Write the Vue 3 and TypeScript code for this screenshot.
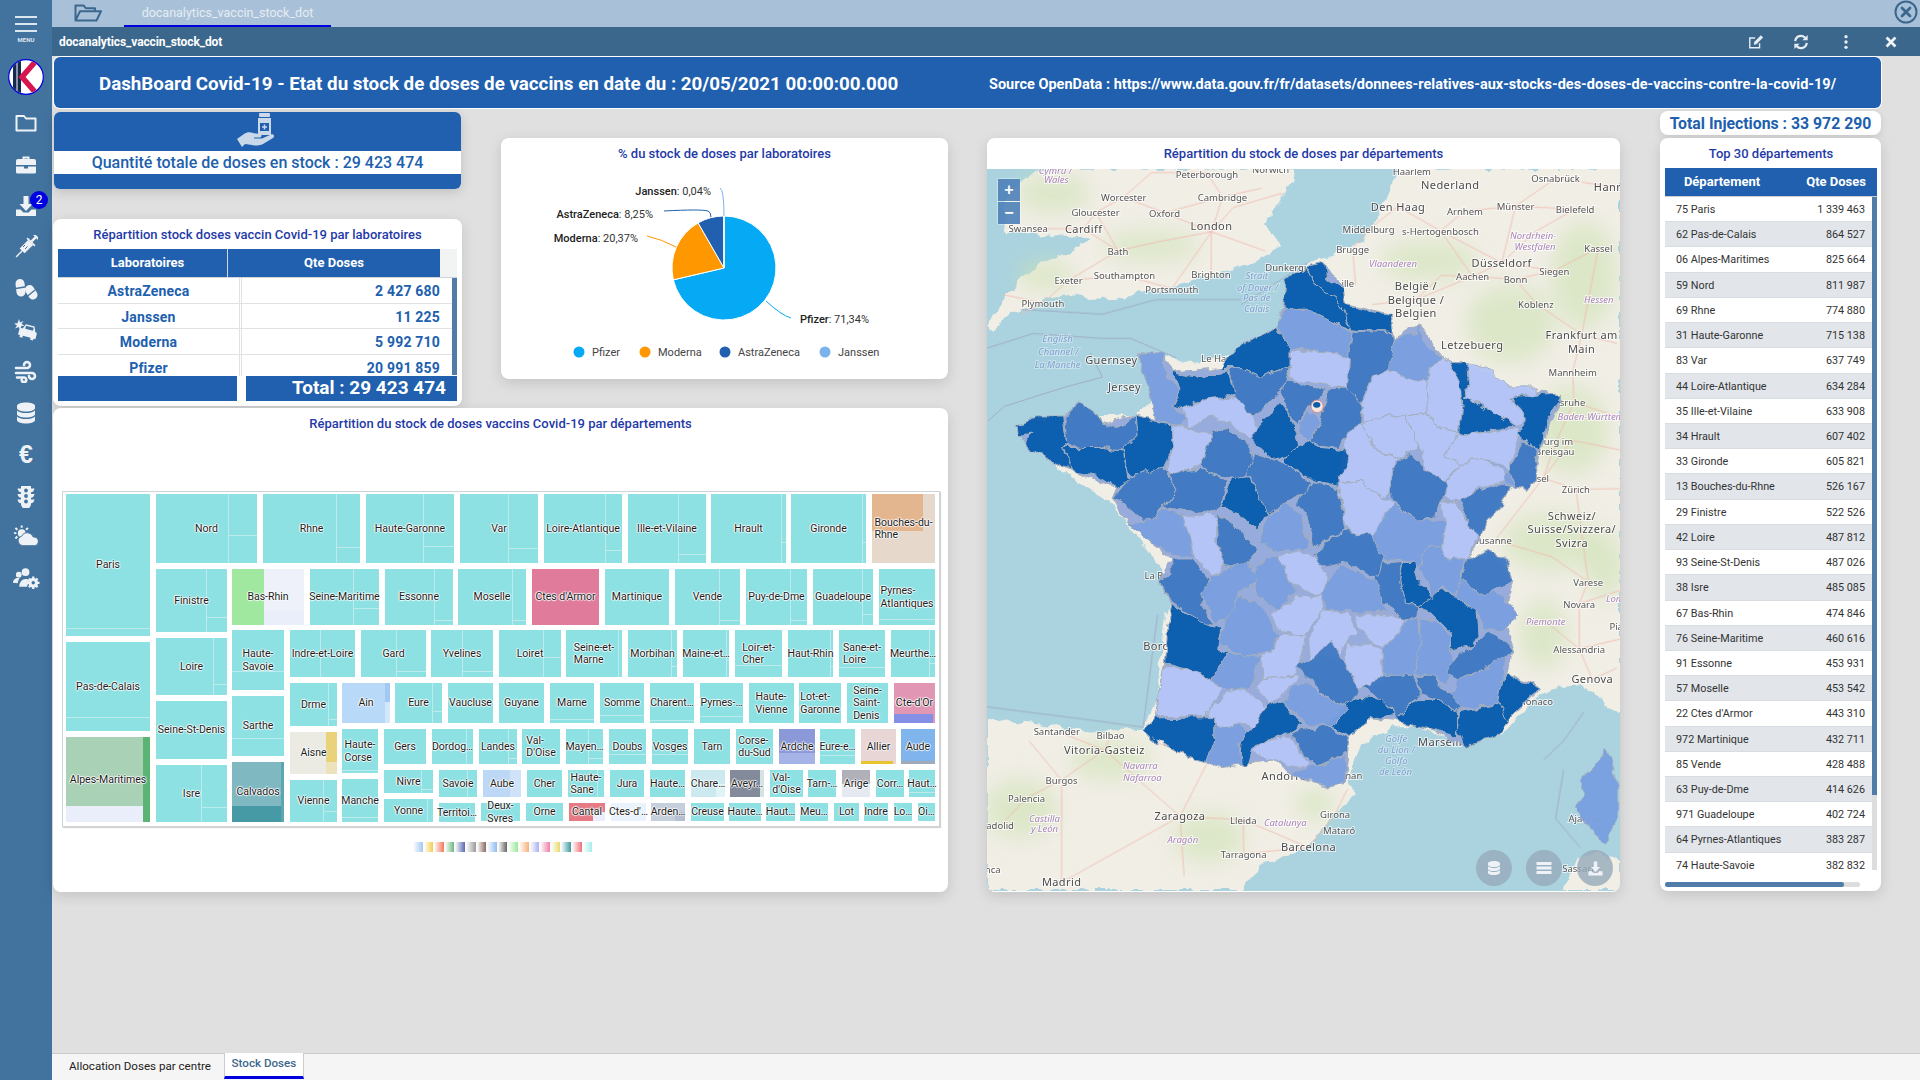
<script setup lang="ts">
interface Part { x1: number; y1: number; x2: number; y2: number; c: string }
interface Tile { label: string; x1: number; y1: number; x2: number; y2: number; c: string; parts: Part[]; lines: Part[] }
interface Opts { c?: string; v?: number; h?: number; p?: [number, number, number, number, string][] }

const ORIGIN_X = 62
const ORIGIN_Y = 491
const CYAN = '#8de1e3'
const LINE = '#bfeaec'

function t(label: string, x1: number, y1: number, x2: number, y2: number, o: Opts = {}): Tile {
  const lines: Part[] = []
  if (o.v) lines.push({ x1: o.v, y1, x2: o.v + 1, y2, c: LINE })
  if (o.h) lines.push({ x1: o.v || x1, y1: o.h, x2, y2: o.h + 1, c: LINE })
  const parts = (o.p || []).map(([a, b, c, d, e]) => ({ x1: a, y1: b, x2: c, y2: d, c: e }))
  return { label, x1, y1, x2, y2, c: o.c || CYAN, parts, lines }
}

const tiles: Tile[] = [
  t('Paris', 66, 494, 150, 636, { h: 628 }),
  t('Pas-de-Calais', 66, 642, 150, 731, { h: 717 }),
  t('Alpes-Maritimes', 66, 737, 150, 822, { c: '#a8d1b5', p: [[66, 806, 143, 822, '#e9eefa'], [143, 737, 150, 822, '#5bb374']] }),
  t('Nord', 156, 494, 257, 563, { v: 228, h: 535 }),
  t('Rhne', 263, 494, 360, 563, { v: 336, h: 547 }),
  t('Haute-Garonne', 366, 494, 454, 563, { v: 423, h: 546 }),
  t('Var', 460, 494, 538, 563, { v: 508, h: 548 }),
  t('Loire-Atlantique', 544, 494, 622, 563, { v: 605, h: 550 }),
  t('Ille-et-Vilaine', 628, 494, 706, 563, { v: 678, h: 554 }),
  t('Hrault', 711, 494, 786, 563, { v: 781, h: 542 }),
  t('Gironde', 791, 494, 866, 563, { v: 862, h: 542 }),
  t('Bouches-du-\nRhne', 872, 494, 935, 563, { c: '#e6d8cb', p: [[872, 494, 923, 531, '#e4b68f']] }),
  t('Finistre', 156, 569, 227, 632, { v: 206, h: 617 }),
  t('Loire', 156, 638, 227, 695, { v: 213, h: 684 }),
  t('Seine-St-Denis', 156, 701, 227, 759),
  t('Isre', 156, 765, 227, 822, { v: 201, h: 807 }),
  t('Bas-Rhin', 232, 569, 304, 625, { c: '#eef1fa', p: [[232, 569, 264, 625, '#a0e8a0'], [264, 611, 304, 625, '#e9eefa']] }),
  t('Seine-Maritime', 310, 569, 379, 625, { v: 353, h: 608 }),
  t('Essonne', 385, 569, 453, 625, { v: 434, h: 620 }),
  t('Moselle', 458, 569, 526, 625, { v: 512, h: 620 }),
  t("Ctes d'Armor", 532, 569, 599, 625, { c: '#e07b9c' }),
  t('Martinique', 605, 569, 669, 625),
  t('Vende', 675, 569, 740, 625, { v: 719, h: 620 }),
  t('Puy-de-Dme', 746, 569, 807, 625, { v: 790, h: 620 }),
  t('Guadeloupe', 813, 569, 873, 625, { v: 862, h: 614 }),
  t('Pyrnes-\nAtlantiques', 879, 569, 935, 625, { h: 619 }),
  t('Haute-\nSavoie', 232, 630, 284, 690, { h: 671 }),
  t('Sarthe', 232, 696, 284, 756, { h: 738 }),
  t('Calvados', 232, 762, 284, 822, { c: '#7fb8c1', p: [[232, 806, 281, 822, '#459aa5'], [281, 762, 284, 822, '#5ba6b0']] }),
  t('Indre-et-Loire', 290, 630, 355, 677, { v: 320 }),
  t('Gard', 361, 630, 426, 677, { v: 396, h: 671 }),
  t('Yvelines', 431, 630, 493, 677, { v: 462, h: 671 }),
  t('Loiret', 499, 630, 561, 677, { v: 543, h: 657 }),
  t('Seine-et-\nMarne', 566, 630, 622, 677, { v: 618 }),
  t('Morbihan', 628, 630, 677, 677, { v: 671, h: 666 }),
  t('Maine-et…', 683, 630, 729, 677, { v: 726, h: 660 }),
  t('Loir-et-\nCher', 735, 630, 782, 677, { h: 665 }),
  t('Haut-Rhin', 788, 630, 833, 677, { v: 830, h: 666 }),
  t('Sane-et-\nLoire', 839, 630, 885, 677, { h: 667 }),
  t('Meurthe…', 891, 630, 935, 677, { v: 929, h: 663 }),
  t('Drme', 290, 683, 337, 726, { v: 328, h: 719 }),
  t('Ain', 342, 683, 390, 723, { c: '#b9d9f8', p: [[385, 683, 390, 702, '#a3c8f4'], [385, 702, 390, 723, '#d4e6fb']] }),
  t('Eure', 395, 683, 442, 723, { v: 432, h: 711 }),
  t('Vaucluse', 448, 683, 493, 723),
  t('Guyane', 499, 683, 544, 723),
  t('Marne', 550, 683, 594, 723, { h: 719 }),
  t('Somme', 600, 683, 644, 723, { h: 715 }),
  t('Charent…', 650, 683, 694, 723, { h: 720 }),
  t('Pyrnes-…', 700, 683, 743, 723, { h: 716 }),
  t('Haute-\nVienne', 749, 683, 794, 723),
  t('Lot-et-\nGaronne', 799, 683, 841, 723),
  t('Seine-\nSaint-\nDenis', 847, 683, 888, 723),
  t("Cte-d'Or", 894, 683, 935, 723, { c: '#e196b4', p: [[894, 714, 933, 723, '#8490e6']] }),
  t('Aisne', 290, 732, 337, 774, { c: '#ebebe3', p: [[326, 732, 337, 762, '#e9d27a'], [326, 762, 337, 774, '#ebe3bc']] }),
  t('Manche', 342, 779, 378, 822, { h: 817 }),
  t('Vienne', 290, 780, 337, 822, { v: 323, h: 811 }),
  t('Haute-\nCorse', 342, 729, 378, 773, { h: 770 }),
  t('Gers', 384, 729, 426, 764),
  t('Dordog…', 432, 729, 473, 764, { v: 466 }),
  t('Landes', 479, 729, 517, 764, { v: 508, h: 758 }),
  t("Val-\nD'Oise", 522, 729, 560, 764),
  t('Mayen…', 566, 729, 603, 764, { v: 588, h: 758 }),
  t('Doubs', 609, 729, 646, 764, { h: 754 }),
  t('Vosges', 652, 729, 688, 764, { h: 754 }),
  t('Tarn', 694, 729, 730, 764),
  t('Corse-\ndu-Sud', 736, 729, 773, 764),
  t('Ardche', 779, 729, 815, 764, { c: '#8b99d8', p: [[779, 753, 815, 764, '#a5b3e6']] }),
  t('Eure-e…', 820, 729, 855, 764, { h: 755 }),
  t('Allier', 861, 729, 896, 764, { c: '#e8d5d5', p: [[861, 761, 893, 764, '#e8c42f']] }),
  t('Aude', 901, 729, 935, 764, { c: '#7fb4ec', p: [[901, 761, 935, 764, '#a0aab8']] }),
  t('Nivre', 384, 770, 433, 793, { v: 421, h: 789 }),
  t('Yonne', 384, 799, 433, 822, { v: 427 }),
  t('Savoie', 439, 770, 477, 797, { v: 467 }),
  t('Territoi…', 439, 803, 475, 822),
  t('Aube', 483, 770, 521, 797, { c: '#bcd8f6', p: [[510, 770, 521, 797, '#cfe2f8']] }),
  t('Cher', 527, 770, 562, 797),
  t('Haute-\nSane', 568, 770, 604, 797, { v: 597 }),
  t('Jura', 610, 770, 644, 797),
  t('Haute…', 650, 770, 685, 797),
  t('Chare…', 691, 770, 725, 797, { c: '#cce9f0', p: [[716, 784, 725, 797, '#e0f3f7']] }),
  t('Aveyr…', 730, 770, 764, 797, { c: '#838a99', p: [[760, 770, 764, 797, '#d4e4e4']] }),
  t("Val-\nd'Oise", 770, 770, 803, 797),
  t('Tarn-…', 808, 770, 836, 797),
  t('Arige', 842, 770, 870, 797, { c: '#b0b0b8', p: [[842, 784, 870, 797, '#e5eaf2']] }),
  t('Corr…', 876, 770, 904, 797),
  t('Haut…', 909, 770, 935, 797, { h: 792 }),
  t('Deux-\nSvres', 481, 803, 520, 821),
  t('Orne', 526, 803, 563, 821),
  t('Cantal', 569, 803, 605, 821, { c: '#e57a85', p: [[593, 812, 605, 821, '#e9eefa']] }),
  t("Ctes-d'…", 611, 803, 646, 821, { c: '#eaf3fb' }),
  t('Arden…', 651, 803, 685, 821, { c: '#c5cfdc', p: [[675, 812, 685, 821, '#b4c0cf']] }),
  t('Creuse', 691, 803, 724, 821),
  t('Haute…', 729, 803, 761, 821),
  t('Haut…', 766, 803, 795, 821),
  t('Meu…', 800, 803, 828, 821),
  t('Lot', 834, 803, 859, 821),
  t('Indre', 864, 803, 888, 821),
  t('Lo…', 894, 803, 912, 821),
  t('Oi…', 918, 803, 935, 821),
]

function box(b: { x1: number; y1: number; x2: number; y2: number }, ox = ORIGIN_X, oy = ORIGIN_Y) {
  return { left: `${b.x1 - ox}px`, top: `${b.y1 - oy}px`, width: `${b.x2 - b.x1}px`, height: `${b.y2 - b.y1}px` }
}

const legendSwatches = ['#a3c8f4', '#f3cf4f', '#f4775c', '#6fb87f', '#5a6ab0', '#999999', '#8a6a60', '#90bcee', '#666666', '#9be89b', '#f5b27a', '#aab0f0', '#f07fa8', '#e8d96f', '#3d9aa0', '#f0717a', '#a5ede9']

// Pie slices, clockwise from twelve o'clock
const pieSlices = [
  { name: 'Pfizer', pct: 71.34, color: '#05a9f4' },
  { name: 'Moderna', pct: 20.37, color: '#ff9800' },
  { name: 'AstraZeneca', pct: 8.25, color: '#2060ae' },
  { name: 'Janssen', pct: 0.04, color: '#7cb2ea' },
]
const legendPos = [78, 144, 224, 324]
const PIE_X = 223
const PIE_Y = 130
const PIE_R = 52
function slicePaths() {
  let a = -Math.PI / 2
  return pieSlices.map(s => {
    const b = a + (s.pct / 100) * Math.PI * 2
    const large = b - a > Math.PI ? 1 : 0
    const d = `M${PIE_X} ${PIE_Y}L${PIE_X + PIE_R * Math.cos(a)} ${PIE_Y + PIE_R * Math.sin(a)}A${PIE_R} ${PIE_R} 0 ${large} 1 ${PIE_X + PIE_R * Math.cos(b)} ${PIE_Y + PIE_R * Math.sin(b)}Z`
    a = b
    return { d, color: s.color }
  })
}
const slices = slicePaths()

const labRows = [
  ['AstraZeneca', '2 427 680'],
  ['Janssen', '11 225'],
  ['Moderna', '5 992 710'],
  ['Pfizer', '20 991 859'],
]

const topRows = [
  ['75 Paris', '1 339 463'], ['62 Pas-de-Calais', '864 527'], ['06 Alpes-Maritimes', '825 664'],
  ['59 Nord', '811 987'], ['69 Rhne', '774 880'], ['31 Haute-Garonne', '715 138'],
  ['83 Var', '637 749'], ['44 Loire-Atlantique', '634 284'], ['35 Ille-et-Vilaine', '633 908'],
  ['34 Hrault', '607 402'], ['33 Gironde', '605 821'], ['13 Bouches-du-Rhne', '526 167'],
  ['29 Finistre', '522 526'], ['42 Loire', '487 812'], ['93 Seine-St-Denis', '487 026'],
  ['38 Isre', '485 085'], ['67 Bas-Rhin', '474 846'], ['76 Seine-Maritime', '460 616'],
  ['91 Essonne', '453 931'], ['57 Moselle', '453 542'], ["22 Ctes d'Armor", '443 310'],
  ['972 Martinique', '432 711'], ['85 Vende', '428 488'], ['63 Puy-de-Dme', '414 626'],
  ['971 Guadeloupe', '402 724'], ['64 Pyrnes-Atlantiques', '383 287'], ['74 Haute-Savoie', '382 832'],
]

// Map shapes are noted in the coordinates of a stretched crop; SX/SY bring them back to pixels
const SX = 1 / 2.45
const SY = 1 / 2.063
const OX = 7
const OY = 39

const D = '#0b5cad'
const M = '#4079c3'
const L = '#7a9fe0'
const P = '#b5c6f7'

// Outline under the departments, so that no land shows between two of them
const france = '745,355 750,305 800,285 845,275 890,330 895,360 1010,380 1018,430 1078,398 1130,470 1150,480 1195,480 1300,530 1425,548 1370,660 1360,720 1340,745 1300,735 1240,810 1225,840 1195,885 1255,870 1305,930 1290,975 1320,1000 1290,1030 1310,1075 1290,1120 1375,1150 1290,1220 1265,1250 1185,1270 1100,1235 1020,1220 960,1215 905,1250 895,1345 850,1355 765,1325 715,1300 640,1310 590,1315 548,1300 430,1260 400,1238 430,1215 435,1170 455,1100 470,980 440,930 470,885 415,850 365,815 325,760 335,740 230,705 120,660 90,610 205,590 240,565 300,605 380,590 430,600 415,540 385,460 450,460 470,500 590,490 640,440 730,410'

const depts: [string, string][] = [
  [D, '800,285 845,275 850,310 890,330 895,360 960,375 1010,380 1015,418 905,410 895,385 870,345 820,320'],
  [D, '745,355 750,305 800,285 820,320 870,345 895,385 905,410 860,395 800,370 745,370'],
  [L, '745,370 800,370 860,395 912,415 905,468 860,460 760,450 730,405'],
  [M, '912,415 1015,418 1018,430 1000,495 960,505 935,565 900,535 905,468'],
  [L, '1018,430 1070,420 1078,398 1085,435 1130,470 1105,490 1095,515 1050,515 1000,495'],
  [P, '960,505 1000,495 1050,515 1095,515 1100,550 1085,585 1040,590 985,590 940,610 938,565'],
  [P, '1130,470 1150,480 1175,520 1185,555 1175,625 1140,620 1085,585 1100,550 1095,515 1105,490'],
  [D, '1150,480 1195,480 1200,530 1190,550 1240,575 1310,610 1200,628 1175,625 1185,555 1175,520'],
  [P, '1195,480 1240,490 1300,530 1365,530 1365,545 1305,550 1335,600 1310,610 1240,575 1190,550 1200,530'],
  [D, '1305,550 1365,545 1425,548 1395,590 1370,660 1350,650 1315,625 1335,600'],
  [M, '1330,640 1365,660 1360,720 1340,745 1305,735 1295,700'],
  [L, '1280,705 1300,705 1310,735 1285,725'],
  [P, '1175,625 1200,628 1315,615 1320,640 1295,700 1230,675 1175,690 1140,670 1160,640'],
  [P, '1040,590 1085,585 1140,620 1175,625 1160,640 1140,670 1175,690 1140,725 1090,700 1080,650 1065,625'],
  [P, '1175,690 1230,675 1285,705 1285,725 1230,735 1180,765 1140,760 1145,725'],
  [P, '985,590 1040,590 1065,625 1080,650 1025,680 965,655 935,605'],
  [M, '1025,680 1055,670 1090,700 1145,725 1140,760 1115,800 1075,805 1010,765 1005,745'],
  [P, '895,630 935,605 965,655 1025,680 1005,745 985,755 935,725 880,730 885,680'],
  [P, '880,730 935,725 985,755 1015,770 1000,800 980,835 910,840 895,810'],
  [P, '1130,770 1165,765 1200,815 1225,830 1195,885 1145,885 1130,860 1140,810'],
  [M, '1175,765 1230,740 1270,730 1300,735 1280,775 1240,810 1225,840 1200,815'],
  [L, '1000,785 1015,770 1075,805 1130,805 1140,810 1130,860 1095,860 1075,900 1040,885 975,890 960,840'],
  [L, '1095,860 1130,860 1145,885 1195,885 1180,915 1175,965 1130,940 1110,965 1075,900'],
  [M, '1195,885 1255,870 1285,880 1305,930 1260,950 1215,955 1180,925'],
  [L, '1180,925 1215,955 1260,950 1290,975 1320,1000 1290,1030 1235,1030 1215,990 1165,965'],
  [D, '1130,945 1165,965 1215,990 1220,1040 1205,1065 1150,1075 1150,1035 1115,1005 1075,985'],
  [D, '1035,890 1065,890 1075,930 1110,965 1075,985 1040,970 1028,930'],
  [M, '975,895 1035,890 1028,930 1040,970 1075,985 1070,1005 1040,1012 990,975 965,930'],
  [L, '885,895 975,935 995,995 935,995 850,990 830,950'],
  [P, '730,880 785,870 830,885 850,920 835,960 790,945 760,930'],
  [L, '700,880 730,880 760,930 780,955 730,985 675,960 665,915'],
  [P, '500,800 560,790 580,800 580,850 600,900 570,920 525,880'],
  [M, '580,790 620,810 680,865 660,890 640,910 600,900 585,860'],
  [L, '745,768 790,795 805,865 730,870 685,850 700,800'],
  [M, '815,725 880,740 897,825 840,850 815,865 800,790 775,770'],
  [M, '895,828 955,835 990,880 975,925 890,890 835,900 820,875 845,850'],
  [P, '915,1000 990,1000 1045,1010 1010,1050 985,1070 955,1055 925,1025'],
  [D, '90,610 150,590 205,590 215,650 200,660 230,700 205,695 120,660 110,640 130,625 95,630'],
  [D, '200,655 250,655 300,655 350,660 365,725 335,740 290,715 230,705'],
  [M, '210,590 240,565 275,575 300,605 345,610 380,590 385,630 350,660 300,655 250,655 215,650'],
  [D, '380,590 470,610 470,660 450,695 370,715 365,710 350,660 385,630'],
  [L, '385,460 450,460 455,510 490,535 470,570 505,590 490,610 430,600 415,540'],
  [D, '470,500 530,510 610,495 625,545 560,555 500,575 470,570 490,535'],
  [P, '500,575 560,555 625,550 665,590 680,630 660,640 620,610 570,590 510,615'],
  [D, '590,490 640,440 730,410 760,450 760,490 690,510 640,490'],
  [M, '615,495 640,490 690,510 760,490 755,520 690,580 665,590 625,550'],
  [P, '760,455 860,460 905,468 900,535 840,525 760,515'],
  [M, '735,540 755,520 845,535 830,555 805,565 780,615 755,580'],
  [D, '735,560 755,580 785,650 770,665 720,680 665,640 680,610'],
  [L, '800,575 835,600 810,640 780,630'],
  [M, '850,535 900,535 940,565 935,605 895,630 880,655 835,650 810,640 835,600 845,570'],
  [D, '785,650 810,640 835,655 900,660 905,685 880,715 880,735 810,720 745,690 745,675'],
  [M, '540,690 570,620 610,615 665,660 670,690 640,725 560,710'],
  [P, '470,610 510,615 570,630 540,690 510,705 455,705 470,660'],
  [M, '325,760 370,715 450,695 480,740 460,765 430,800 410,810 355,770'],
  [M, '460,705 540,700 605,725 590,780 570,785 510,790 450,780 480,740'],
  [D, '615,720 660,715 690,760 720,785 690,800 680,830 630,790 590,780'],
  [M, '670,665 720,680 745,690 810,725 800,750 745,770 700,790 665,715 650,715'],
  [L, '365,815 430,800 450,780 500,800 525,880 470,875 415,850'],
  [M, '470,885 520,885 570,935 540,980 570,1020 540,1015 470,975 440,930 470,915'],
  [L, '570,920 610,905 660,890 675,930 630,965 605,1010 575,1020 540,960'],
  [L, '630,965 680,975 730,1040 715,1075 650,1085 585,1060 605,1005'],
  [P, '730,985 790,960 840,960 840,990 800,1040 735,1035 712,1000'],
  [P, '840,990 905,1000 925,1040 900,1050 880,1085 810,1090 805,1050'],
  [D, '470,980 540,1015 590,1030 585,1070 610,1075 570,1135 530,1115 455,1100 460,1020'],
  [P, '455,1105 530,1115 595,1150 555,1200 555,1210 430,1210 435,1170'],
  [L, '610,1075 650,1085 690,1085 670,1120 665,1150 610,1160 570,1135'],
  [P, '730,1040 800,1040 790,1090 770,1125 690,1130 690,1085 715,1075'],
  [M, '860,1055 900,1110 930,1150 900,1195 850,1170 775,1105 810,1090'],
  [P, '895,1060 955,1060 985,1075 990,1140 950,1145 925,1150 895,1110'],
  [L, '985,1075 1050,1010 1075,1005 1080,1060 1060,1125 995,1140'],
  [L, '1080,1005 1115,1010 1150,1040 1150,1080 1170,1105 1145,1145 1110,1125 1060,1120 1080,1060'],
  [M, '1205,1065 1240,1035 1280,1050 1310,1075 1280,1095 1240,1110 1170,1135 1145,1115 1170,1085'],
  [L, '1170,1135 1240,1110 1290,1085 1280,1130 1270,1185 1170,1195 1150,1165'],
  [D, '1290,1120 1320,1135 1375,1150 1345,1170 1290,1220 1270,1185 1280,1140'],
  [D, '1175,1200 1270,1185 1295,1220 1265,1250 1185,1270 1170,1235'],
  [M, '1065,1125 1110,1125 1150,1165 1180,1195 1170,1200 1120,1175 1080,1165'],
  [D, '1075,1175 1120,1175 1170,1200 1170,1250 1100,1235 1020,1220 1050,1190'],
  [M, '990,1125 1060,1125 1080,1165 1050,1190 1020,1220 1005,1190 935,1150 950,1145'],
  [D, '925,1170 990,1175 1015,1210 960,1215 905,1250 850,1225 880,1200'],
  [L, '770,1145 800,1140 850,1170 900,1195 860,1230 800,1225 745,1180'],
  [P, '690,1130 770,1125 780,1130 745,1165 710,1190 680,1150'],
  [P, '555,1200 610,1160 660,1155 705,1195 680,1230 630,1225 590,1240 560,1210'],
  [D, '705,1190 745,1180 790,1225 760,1240 700,1260 665,1280 655,1310 635,1310 640,1260'],
  [L, '575,1220 590,1235 630,1225 655,1240 635,1270 640,1310 590,1315 550,1300 575,1260'],
  [D, '400,1238 430,1215 575,1212 575,1260 548,1300 500,1290 430,1260'],
  [P, '665,1285 700,1260 760,1250 800,1300 810,1310 780,1315 715,1300'],
  [M, '760,1240 850,1230 905,1255 900,1285 825,1310 795,1290'],
  [L, '765,1325 830,1310 895,1290 895,1345 850,1355 790,1340'],
]
const corsica = '1470,1340 1520,1300 1535,1280 1560,1330 1560,1420 1530,1470 1490,1440 1460,1395 1480,1370'

const land = [
  '150,80 770,80 765,105 725,165 690,190 725,215 740,240 690,265 620,285 550,305 470,325 400,335 340,348 280,350 220,340 170,345 110,370 60,385 30,420 17,400 40,380 60,345 110,300 160,270 240,245 270,225 205,215 150,222 100,212 60,205 60,150 100,110',
  '800,280 870,255 940,230 965,190 1000,135 1025,80 1568,80 1568,1210 1520,1170 1470,1145 1420,1150 1375,1160 1290,1240 1190,1270 1070,1230 1010,1230 930,1270 900,1340 920,1370 860,1420 800,1480 680,1520 640,1568 17,1568 17,1215 130,1225 280,1240 400,1235 435,1170 455,1000 470,980 440,900 365,820 320,765 210,710 90,620 210,590 380,590 470,520 400,460 530,480 600,470 740,420 745,340',
  '1430,1568 1460,1510 1520,1490 1568,1510 1568,1568',
]

const greens: [number, number, number, number][] = [
  [180, 130, 90, 40], [420, 240, 120, 30], [160, 300, 70, 30], [1100, 270, 120, 40], [1300, 400, 110, 80], [1450, 620, 90, 90],
  [1480, 300, 80, 110], [1400, 850, 120, 60], [1380, 1040, 60, 70], [100, 1400, 90, 60], [320, 1300, 100, 40], [560, 1460, 90, 50], [820, 1390, 50, 30], [1530, 900, 50, 70],
]

const roads = [
  '284,170 352,138 452,171 567,210 594,138 556,88', '254,204 284,170', '567,210 470,327', '567,210 566,297', '567,210 700,250', '217,310 354,300 470,327',
  '154,357 217,310 338,249 284,170', '1024,158 1128,208 1207,302 1278,274 1312,157', '1024,158 952,205 913,245 920,320', '1128,208 1188,167 1312,157 1458,163',
  '1278,274 1407,290 1515,243', '1312,308 1362,358 1474,422 1452,499 1455,562', '1474,422 1515,243', '1207,302 1068,350 960,360', '1455,562 1412,641 1380,718 1460,741',
  '1460,741 1490,932 1468,977 1468,1070 1500,1133', '1262,846 1380,718', '1468,977 1568,950', '1468,1070 1568,1050', '188,1240 305,1279 320,1248', '305,1279 200,1341 114,1378 52,1433',
  '200,1341 200,1552', '305,1279 490,1416 645,1423 805,1480', '805,1480 870,1411', '490,1416 200,1552', '646,1493 805,1480',
  '352,138 420,88 556,88', '452,171 594,138 690,120', '567,210 620,160 740,130', '338,249 440,230 567,210', '118,203 254,204 338,249', '60,340 154,357 100,380',
  '1128,208 1278,274 1360,210 1458,163', '1312,157 1410,100 1560,118', '1207,302 1312,308 1407,290', '1068,350 1130,300 1207,302', '1474,422 1560,440', '1455,562 1560,590',
  '1460,741 1568,740', '1380,718 1450,640 1568,660', '1262,846 1400,880 1490,932', '1380,1010 1468,1070', '1500,1133 1560,1110', '120,1260 200,1341', '490,1416 560,1300 420,1260',
  '645,1423 646,1493', '490,1416 500,1540', '870,1411 900,1360',
]

const borders = [
  '17,450 130,420 300,430 370,430 480,470', '17,1190 250,1215 400,1232', '435,1000 415,1130 400,1230', '20,600 60,570 210,530 300,510 270,460',
  '640,360 735,310 800,275', '100,370 300,380 430,350 640,350', '1380,1300 1430,1260 1480,1200', '1430,1320 1410,1420 1470,1480',
]

type Lbl = [string, number, number, string?]
const labels: Lbl[] = [
  ['Peterborough', 556, 90], ['Norwich', 712, 80], ['Haarlem', 1058, 84], ['Cymru /', 185, 82, 'r'], ['Wales', 187, 101, 'r'],
  ['Nederland', 1152, 114, 'b'], ['Osnabrück', 1410, 100], ['Hannover', 1570, 118, 'b'], ['Worcester', 352, 138], ['Cambridge', 594, 138],
  ['Den Haag', 1024, 158, 'b'], ['Arnhem', 1188, 167], ['Münster', 1312, 157], ['Bielefeld', 1458, 163], ['Gloucester', 283, 170], ['Oxford', 452, 171],
  ['Swansea', 118, 203], ['Cardiff', 254, 204, 'b'], ['London', 567, 199, 'b'], ['Middelburg', 952, 205], ['s-Hertogenbosch', 1128, 208],
  ['Nordrhein-', 1355, 216, 'r'], ['Westfalen', 1360, 239, 'r'], ['Kassel', 1515, 243], ['Bath', 338, 249], ['Brugge', 913, 245], ['Vlaanderen', 1012, 274, 'r'],
  ['Düsseldorf', 1278, 274, 'b'], ['Exeter', 217, 310], ['Southampton', 354, 300], ['Brighton', 566, 297], ['Strait', 678, 300, 'w'], ['of Dover /', 680, 323, 'w'],
  ['Pas de', 678, 345, 'w'], ['Calais', 678, 367, 'w'], ['Portsmouth', 470, 327], ['Dunkerque', 760, 283], ['Lille', 895, 315], ['Aachen', 1207, 302], ['Bonn', 1312, 308],
  ['Siegen', 1407, 290], ['België /', 1068, 322, 'b'], ['Belgique /', 1068, 350, 'b'], ['Belgien', 1068, 378, 'b'], ['Koblenz', 1362, 358], ['Hessen', 1516, 348, 'r'],
  ['Plymouth', 154, 357], ['Frankfurt am', 1474, 422, 'b'], ['Main', 1474, 451, 'b'], ['English', 190, 430, 'w'], ['Channel /', 192, 456, 'w'], ['La Manche', 190, 483, 'w'],
  ['Guernsey', 322, 475, 'b'], ['Letzebuerg', 1206, 444, 'b'], ['Le Havre', 590, 471], ['Rouen', 690, 478], ['Mannheim', 1452, 499], ['Jersey', 354, 530, 'b'],
  ['Karlsruhe', 1430, 562], ['Baden-Württemberg', 1520, 591, 'r'], ['Freiburg im', 1390, 641], ['Breisgau', 1408, 663], ['Zürich', 1460, 741], ['Basel', 1365, 718],
  ['Schweiz/', 1450, 797, 'b'], ['Suisse/Svizzera/', 1450, 824, 'b'], ['Svizra', 1450, 852, 'b'], ['Lausanne', 1250, 846], ['Varese', 1490, 932], ['Novara', 1468, 977],
  ['Lombardia', 1590, 965, 'r'], ['Piemonte', 1386, 1012, 'r'], ['Piacenza', 1590, 1023], ['Alessandria', 1468, 1070], ['Genova', 1500, 1133, 'b'],
  ['La Rochelle', 465, 918], ['Bordeaux', 465, 1064, 'b'], ['Santander', 188, 1240], ['Bilbao', 320, 1248], ['Vitoria-Gasteiz', 305, 1279, 'b'], ['Marseille', 1135, 1262, 'b'],
  ['Golfe', 1020, 1254, 'w'], ['du Lion /', 1020, 1277, 'w'], ['Golfo', 1020, 1300, 'w'], ['de León', 1018, 1322, 'w'], ['Navarra', 393, 1311, 'r'], ['Nafarroa', 398, 1334, 'r'],
  ['Andorra', 745, 1332, 'b'], ['Perpignan', 880, 1330], ['Burgos', 200, 1341], ['Palencia', 114, 1378], ['Zaragoza', 490, 1416, 'b'], ['Lleida', 645, 1423], ['Girona', 870, 1411],
  ['Catalunya', 748, 1428, 'r'], ['Mataró', 880, 1445], ['Castilla', 158, 1419, 'r'], ['y León', 158, 1441, 'r'], ['Valladolid', 30, 1433], ['Aragón', 497, 1462, 'r'],
  ['Barcelona', 805, 1480, 'b'], ['Tarragona', 646, 1493], ['Madrid', 200, 1552, 'b'], ['Cuenca', 10, 1525], ['Ajaccio', 1480, 1420], ['Sassari', 1465, 1522], ['Monaco', 1360, 1177],
]
</script>

<template>
  <div class="app">
    <aside class="side">
      <div class="burger"><i></i><i></i><i></i><span>MENU</span></div>
      <svg class="logo" viewBox="0 0 36 36" width="36" height="36">
        <circle cx="18" cy="18" r="17.3" fill="#fff" stroke="#0000e0" stroke-width="1.2" />
        <clipPath id="lg"><circle cx="18" cy="18" r="16.7" /></clipPath>
        <g clip-path="url(#lg)">
          <rect x="5" y="0" width="3.5" height="36" fill="#13294f" />
          <rect x="9.5" y="0" width="3.5" height="36" fill="#13294f" />
          <path d="M27 3 L14 18 L27 33" fill="none" stroke="#d5164f" stroke-width="5.5" />
        </g>
      </svg>
      <svg class="ic" viewBox="0 0 24 24"><path d="M2.500 5h7.500l2 2.500h9.500v12h-19z" fill="none" stroke="#eef2f6" stroke-width="2" stroke-linejoin="round" /></svg>
      <svg class="ic" viewBox="0 0 24 24"><path d="M8.500 7V4.500h7V7H20a2 2 0 0 1 2 2v4H2V9a2 2 0 0 1 2-2zM10.500 6.500v.5h3v-.5zM2 14.500h8v2h4v-2h8V20a1.500 1.500 0 0 1-1.500 1.500h-17A1.500 1.500 0 0 1 2 20z" fill="#eef2f6" fill-rule="evenodd" /></svg>
      <div class="dl">
        <svg class="ic" viewBox="0 0 24 24"><path d="M9.500 2h5v8h4l-6.500 7-6.500-7h4zM2 15.500h4.500l3 3h5l3-3H22V22H2z" fill="#eef2f6" /></svg>
        <b class="badge">2</b>
      </div>
      <svg class="ic" viewBox="0 0 24 24"><g transform="rotate(45 12 12)" fill="#eef2f6"><rect x="8.500" y="5.500" width="7" height="12" /><rect x="6.500" y="4" width="11" height="1.800" /><rect x="10.800" y="-2" width="2.400" height="6.500" /><rect x="8" y="-3.500" width="8" height="2" /><rect x="11.300" y="17" width="1.400" height="9" /></g><path d="M11 14l2.500-2.500M9 12l2-2" stroke="#42729e" stroke-width="1" /></svg>
      <svg class="ic" viewBox="0 0 24 24"><g fill="none" stroke="#eef2f6" stroke-width="9" stroke-linecap="round"><path d="M6 6.500 7 15" /><path d="M15.500 12.500 19 18" /></g><path d="M1.500 11.500 11 10M12.500 20 21 13" stroke="#42729e" stroke-width="1.300" /></svg>
      <svg class="ic" viewBox="0 0 24 24"><g transform="rotate(15 14 14)" fill="#eef2f6"><path d="M8 12l2-5h9l2 5a2 2 0 0 1 2 2v5h-2v2h-3v-2H10v2H7v-2H5v-5a2 2 0 0 1 3-2z" /><rect x="10.500" y="8.500" width="8" height="3" fill="#42729e" /></g><path d="M5 1l1 3.500L9.500 3 7.500 6l3 1.500-3.500.7L6.500 12 4.500 9 1 10.500 3 7.500 0 5.500l3.500-.3z" fill="#eef2f6" /></svg>
      <svg class="ic" viewBox="0 0 24 24" fill="none" stroke="#eef2f6" stroke-width="2.600" stroke-linecap="round"><path d="M2 9h11a3 3 0 1 0-3-3" /><path d="M2 14h16a3 3 0 1 1-3 3" /><path d="M3 18.500h7a2.300 2.300 0 1 1-2.300 2.300" /></svg>
      <svg class="ic" viewBox="0 0 24 24"><g fill="#eef2f6"><path d="M3 5c0-2 4-3.500 9-3.500S21 3 21 5v2c0 2-4 3.500-9 3.500S3 9 3 7z" /><path d="M3 9.500c2 1.800 5.500 2.600 9 2.600s7-.8 9-2.600V13c0 2-4 3.500-9 3.500S3 15 3 13z" /><path d="M3 15.500c2 1.800 5.500 2.600 9 2.600s7-.8 9-2.600V19c0 2-4 3.500-9 3.500S3 21 3 19z" /></g></svg>
      <div class="euro">€</div>
      <svg class="ic" viewBox="0 0 24 24"><path d="M7 2h10v2.500h3.500C20 7 19 8 17 8.300V10h3.500C20 12.500 19 13.500 17 13.800V15.500h3.500C20 18 19 19 17 19.300V20a5 5 0 0 1-10 0v-.7C5 19 4 18 3.500 15.500H7v-1.700C5 13.500 4 12.500 3.500 10H7V8.300C5 8 4 7 3.500 4.500H7z" fill="#eef2f6" /><g fill="#42729e"><circle cx="12" cy="6.500" r="1.900" /><circle cx="12" cy="12" r="1.900" /><circle cx="12" cy="17.500" r="1.900" /></g></svg>
      <svg class="ic wide" viewBox="0 0 28 24"><g fill="#eef2f6"><circle cx="9" cy="8" r="4" /><path d="M9 0v2.500M9 13.500V16M1 8h2.500M2.500 2.500 4.500 4.500M15.500 2.500 13.500 4.500M2.500 13.500l2-2" stroke="#eef2f6" stroke-width="2" /><path d="M10 21a5 5 0 0 1-1-9.800A6.500 6.500 0 0 1 21 12a4.500 4.500 0 0 1 1.500 9z" stroke="#42729e" stroke-width="1" /></g></svg>
      <svg class="ic wide" viewBox="0 0 28 24"><g fill="#eef2f6"><circle cx="6" cy="8.500" r="3" /><circle cx="13" cy="6" r="4" /><path d="M0 17c0-3 2.500-5 5-5 1 0 2 .5 2 .5-1.500 1.500-2 3-2 5z" /><path d="M6.500 21c0-5 3-8 6.500-8 1.500 0 3 .5 3.800 1.200L14.500 21z" /><circle cx="21" cy="17" r="5" /><g stroke="#eef2f6" stroke-width="2.400"><path d="M21 10.500v13M14.500 17h13M16.500 12.500l9 9M25.500 12.500l-9 9" /></g><circle cx="21" cy="17" r="1.800" fill="#42729e" /></g></svg>
    </aside>

    <div class="main">
      <header class="topbar">
        <svg class="top-folder" viewBox="0 0 28 20" width="28" height="20"><path d="M1.500 17.500V2.500h8l2.500 2.800h9v3M1.500 17.500 6 8.300h21l-4.500 9.200z" fill="none" stroke="#3c678c" stroke-width="2" stroke-linejoin="round" /></svg>
        <div class="file-tab">docanalytics_vaccin_stock_dot</div>
        <svg class="top-close" viewBox="0 0 24 24" width="24" height="24"><circle cx="12" cy="12" r="10.500" fill="none" stroke="#3c678c" stroke-width="2" /><path d="M8 8l8 8M16 8l-8 8" stroke="#3c678c" stroke-width="2.800" stroke-linecap="round" /></svg>
      </header>
      <div class="subbar">
        <span class="subbar-title">docanalytics_vaccin_stock_dot</span>
        <div class="subbar-tools">
          <svg viewBox="0 0 18 18" width="16" height="16"><path d="M13 10.500V15.500H2V4.500H8" fill="none" stroke="#e6edf3" stroke-width="1.600" /><path d="M7 9 14.500 1.500 17 4 9.500 11.500 6.500 12z" fill="#e6edf3" /></svg>
          <svg viewBox="0 0 18 18" width="16" height="16"><path d="M2.500 8A6.500 6.500 0 0 1 14 4.500M15.500 10A6.500 6.500 0 0 1 4 13.500" fill="none" stroke="#e6edf3" stroke-width="2.400" /><path d="M16.500 1v6h-6zM1.500 17v-6h6z" fill="#e6edf3" /></svg>
          <svg viewBox="0 0 18 18" width="16" height="16"><g fill="#e6edf3"><circle cx="9" cy="3" r="1.900" /><circle cx="9" cy="9" r="1.900" /><circle cx="9" cy="15" r="1.900" /></g></svg>
          <svg viewBox="0 0 18 18" width="16" height="16"><path d="M4 4l10 10M14 4 4 14" stroke="#f2f5f8" stroke-width="3" /></svg>
        </div>
      </div>

      <div class="content">
        <div class="banner">
          <span class="banner-title">DashBoard Covid-19 - Etat du stock de doses de vaccins en date du : 20/05/2021 00:00:00.000</span>
          <span class="banner-source">Source OpenData : https://www.data.gouv.fr/fr/datasets/donnees-relatives-aux-stocks-des-doses-de-vaccins-contre-la-covid-19/</span>
        </div>

        <div class="board">
          <div class="board-left">
            <div class="board-top">
              <div class="col-lab">
                <div class="qty">
                  <div class="qty-head">
                    <svg viewBox="0 0 44 38" width="44" height="38">
                      <g fill="#c9d9ea">
                        <rect x="23" y="1" width="11" height="4" rx="1" />
                        <path d="M22 6h13v17H22z" />
                        <path d="M1 27l7-5c3-2 6-2 9-1l7 1c2 0 2 3 0 3.500h-6v1h8l9-4c3-1 4 2 2 3.500l-10 6c-3 1.500-7 2-11 1l-7-1-3 3z" />
                      </g>
                      <rect x="24" y="11" width="9" height="8" fill="#2060ae" />
                      <path d="M28.500 12.500v5M26 15h5" stroke="#c9d9ea" stroke-width="1.500" />
                    </svg>
                  </div>
                  <div class="qty-text">Quantité totale de doses en stock : 29 423 474</div>
                  <div class="qty-foot"></div>
                </div>
                <div class="card lab">
                  <div class="card-title">Répartition stock doses vaccin Covid-19 par laboratoires</div>
                  <div class="lab-head">
                    <span class="lh-a">Laboratoires</span>
                    <span class="lh-b">Qte Doses</span>
                    <span class="lh-c"></span>
                  </div>
                  <div class="lab-body">
                    <div class="lab-rows">
                      <div v-for="r in labRows" :key="r[0]" class="lab-row">
                        <span class="lc-a">{{ r[0] }}</span>
                        <span class="lc-b">{{ r[1] }}</span>
                      </div>
                    </div>
                    <div class="lab-scroll"></div>
                  </div>
                  <div class="lab-foot">
                    <span class="lf-a"></span>
                    <span class="lf-b">Total : 29 423 474</span>
                  </div>
                </div>
              </div>

              <div class="card pie">
                <div class="card-title">% du stock de doses par laboratoires</div>
                <svg class="pie-svg" viewBox="0 30 447 211" width="447" height="211">
                  <path v-for="s in slices" :key="s.color" :d="s.d" :fill="s.color" stroke="#fff" stroke-width="1" />
                  <path d="M219 50Q223 52 223 78" fill="none" stroke="#7cb2ea" />
                  <path d="M163 73Q200 71 207 73Q210 74 210 79" fill="none" stroke="#2060ae" />
                  <path d="M146 98Q160 101 175 109" fill="none" stroke="#ff9800" />
                  <path d="M265 163Q280 177 290 180" fill="none" stroke="#05a9f4" />
                  <text class="pie-lb" x="210" y="57" text-anchor="end"><tspan class="strong">Janssen</tspan>: 0,04%</text>
                  <text class="pie-lb" x="152" y="80" text-anchor="end"><tspan class="strong">AstraZeneca</tspan>: 8,25%</text>
                  <text class="pie-lb" x="137" y="104" text-anchor="end"><tspan class="strong">Moderna</tspan>: 20,37%</text>
                  <text class="pie-lb" x="299" y="185"><tspan class="strong">Pfizer</tspan>: 71,34%</text>
                  <g v-for="(s, i) in pieSlices" :key="s.name">
                    <circle :cx="legendPos[i]" cy="214" r="5.500" :fill="s.color" />
                    <text class="pie-lg" :x="legendPos[i] + 13" y="218">{{ s.name }}</text>
                  </g>
                </svg>
              </div>
            </div>

            <div class="card tree">
              <div class="card-title">Répartition du stock de doses vaccins Covid-19 par départements</div>
              <div class="treemap">
                <div v-for="(x, i) in tiles" :key="i" class="tile" :style="{ ...box(x), background: x.c }">
                  <div v-for="(p, j) in x.parts" :key="j" class="part" :style="{ ...box(p, x.x1, x.y1), background: p.c }"></div>
                  <div v-for="(p, j) in x.lines" :key="'l' + j" class="part" :style="{ ...box(p, x.x1, x.y1), background: p.c }"></div>
                  <div class="tile-label"><span>{{ x.label }}</span></div>
                </div>
              </div>
              <div class="swatches">
                <i v-for="c in legendSwatches" :key="c" :style="{ background: `linear-gradient(90deg, #fff, ${c})` }"></i>
              </div>
            </div>
          </div>

          <div class="card map-card">
            <div class="card-title">Répartition du stock de doses par départements</div>
            <div class="map-wrap">
              <svg class="map" viewBox="0 0 633 722" width="633" height="722">
                <defs>
                  <filter id="soft" x="-20%" y="-20%" width="140%" height="140%"><feGaussianBlur stdDeviation="22" /></filter>
                  <filter id="rough" x="-3%" y="-3%" width="106%" height="106%">
                    <feTurbulence type="fractalNoise" baseFrequency="0.035" numOctaves="3" seed="4" />
                    <feDisplacementMap in="SourceGraphic" scale="20" xChannelSelector="R" yChannelSelector="G" />
                    <feGaussianBlur stdDeviation="0.8" />
                  </filter>
                </defs>
                <rect width="633" height="722" fill="#aad3df" />
                <g :transform="`translate(${-OX} ${-OY}) scale(${SX} ${SY})`">
                  <g filter="url(#rough)">
                    <polygon v-for="(p, i) in land" :key="i" :points="p" fill="#f1eee6" />
                  </g>
                  <g filter="url(#soft)">
                    <ellipse v-for="(g, i) in greens" :key="'g' + i" :cx="g[0]" :cy="g[1]" :rx="g[2]" :ry="g[3]" fill="#cfe3b4" opacity=".6" />
                  </g>
                  <polyline v-for="(r, i) in roads" :key="'r' + i" :points="r" class="road" />
                  <polyline v-for="(b, i) in borders" :key="'b' + i" :points="b" class="sea-line" />
                </g>
                <text v-for="l in labels" :key="l[0]" :class="['lb', l[3]]" :x="l[1] * SX - OX" :y="l[2] * SY - OY + 4" text-anchor="middle">{{ l[0] }}</text>
                <g :transform="`translate(${-OX} ${-OY}) scale(${SX} ${SY})`">
                  <g filter="url(#rough)">
                    <polygon :points="france" fill="#93a8dc" stroke="#a3aebd" class="dept" />
                    <polygon v-for="(d, i) in depts" :key="'d' + i" :points="d[1]" :fill="d[0]" class="dept" />
                    <polygon :points="corsica" :fill="L" class="dept" />
                  </g>
                  <ellipse cx="826" cy="570" rx="15" ry="13" fill="#f5e6e0" stroke="#d98a80" stroke-width="1" vector-effect="non-scaling-stroke" />
                  <ellipse cx="825" cy="567" rx="9" ry="6" fill="#0b5cad" />
                </g>
              </svg>
              <div class="zoom-ctl"><b>+</b><b>−</b></div>
              <div class="fab fab-a">
                <svg viewBox="0 0 24 24" width="16" height="16"><g fill="#eef2f6"><path d="M3 5c0-2 4-3.500 9-3.500S21 3 21 5v2c0 2-4 3.500-9 3.500S3 9 3 7z" /><path d="M3 9.500c2 1.800 5.500 2.600 9 2.600s7-.8 9-2.600V13c0 2-4 3.500-9 3.500S3 15 3 13z" /><path d="M3 15.500c2 1.800 5.500 2.600 9 2.600s7-.8 9-2.600V19c0 2-4 3.500-9 3.500S3 21 3 19z" /></g></svg>
              </div>
              <div class="fab fab-b">
                <svg viewBox="0 0 24 24" width="18" height="18"><path d="M2 4h20v4H2zM2 10h20v4H2zM2 16h20v4H2z" fill="#eef2f6" /></svg>
              </div>
              <div class="fab fab-c">
                <svg viewBox="0 0 24 24" width="17" height="17"><path d="M9.500 2h5v8h4l-6.500 7-6.500-7h4zM2 16h5l2 2.500h6l2-2.500h5v6H2z" fill="#eef2f6" /></svg>
              </div>
            </div>
          </div>

          <div class="col-right">
            <div class="total-inj">Total Injections : 33 972 290</div>
            <div class="card top30">
              <div class="card-title">Top 30 départements</div>
              <div class="top-head">
                <span class="th-a">Département</span>
                <span class="th-b">Qte Doses</span>
              </div>
              <div class="top-body">
                <div class="top-rows">
                  <div v-for="r in topRows" :key="r[0]" class="top-row">
                    <span>{{ r[0] }}</span><span>{{ r[1] }}</span>
                  </div>
                </div>
                <div class="top-scroll"><i></i></div>
              </div>
              <div class="h-scroll"><i></i></div>
            </div>
          </div>
        </div>
      </div>

      <footer class="tabs">
        <span class="tab">Allocation Doses par centre</span>
        <span class="tab active">Stock Doses</span>
      </footer>
    </div>
  </div>
</template>

<style scoped>
.app { display: flex; width: 1920px; height: 1080px; overflow: hidden; background: #e0e0e0; font-family: Roboto, "Liberation Sans", sans-serif; }
.side { width: 52px; flex-shrink: 0; background: #42729e; display: flex; flex-direction: column; align-items: center; }
.burger { margin-top: 16px; width: 26px; display: flex; flex-direction: column; gap: 5px; align-items: center; }
.burger i { display: block; width: 22px; height: 2px; background: #dce6ef; }
.burger span { font-size: 6px; font-weight: 700; color: #dce6ef; margin-top: -1px; line-height: 7px; }
.logo { margin-top: 16px; }
.ic { width: 24px; height: 24px; margin-top: 17.400px; flex-shrink: 0; display: block; }
.ic.wide { width: 27px; height: 24px; }
.logo + .ic { margin-top: 16px; }
.dl { position: relative; width: 24px; height: 24px; margin-top: 17.400px; }
.dl .ic { margin-top: 0; }
.badge { position: absolute; left: 16px; top: -3px; width: 18px; height: 18px; border-radius: 50%; background: #0000e0; color: #fff; font-size: 12px; font-weight: 400; text-align: center; line-height: 18px; }
.euro { height: 24px; margin-top: 17.400px; color: #eef2f6; font: 700 25px/24px "Liberation Sans", sans-serif; }
.main { flex: 1; min-width: 0; display: flex; flex-direction: column; }
.topbar { height: 27px; background: #a8c1d9; display: flex; align-items: center; position: relative; }
.top-folder { margin-left: 22px; margin-top: -2px; }
.file-tab { margin-left: 22px; width: 207px; height: 27px; box-sizing: border-box; border-bottom: 2px solid #0000e0; color: #e6ecf2; font-size: 12.500px; line-height: 25px; text-align: center; }
.top-close { position: absolute; right: 2px; top: 0; }
.subbar { height: 29px; background: #3c678c; display: flex; align-items: center; justify-content: space-between; padding: 0 21px 0 7px; box-sizing: border-box; }
.subbar-title { color: #fff; font-size: 12px; font-weight: 700; letter-spacing: -.1px; }
.subbar-tools { display: flex; gap: 29px; }
.content { flex: 1; min-height: 0; padding: 1px 0 0 1px; box-sizing: border-box; position: relative; }
.banner { margin-left: 1px; width: 1827px; height: 51px; box-sizing: border-box; background: #2060ae; border-radius: 6px; color: #fff; display: flex; align-items: center; padding: 3px 0 0 45px; box-shadow: 0 0 0 1px #fff; }
.banner-title { font-size: 18.750px; font-weight: 700; width: 890px; white-space: nowrap; }
.banner-source { font-size: 14.500px; font-weight: 700; white-space: nowrap; }
.board { display: flex; margin-top: 1px; }
.board-left { width: 895px; flex-shrink: 0; }
.board-top { display: flex; height: 299px; }
.col-lab { width: 409px; flex-shrink: 0; }
.card { background: #fff; border-radius: 8px; box-shadow: 0 4px 14px rgba(0, 0, 0, .13); }
.card-title { height: 30px; text-align: center; color: #1f3aa8; font-size: 13px; font-weight: 500; line-height: 32px; }
.qty { margin: 3px 0 0 1px; width: 407px; border-radius: 6px; overflow: hidden; box-shadow: 0 3px 12px rgba(0, 0, 0, .15); background: #fff; }
.qty-head { height: 39px; background: #2060ae; display: flex; justify-content: center; overflow: hidden; }
.qty-text { height: 23px; text-align: center; color: #2060ae; font-size: 16px; font-weight: 500; line-height: 23px; }
.qty-foot { height: 15px; background: #2060ae; }
.lab { margin-top: 30px; height: 187px; padding: 0 5px; box-sizing: border-box; }
.lab-head { display: flex; height: 29px; color: #fff; font-size: 13px; font-weight: 700; line-height: 28px; text-align: center; border-bottom: 1px solid #d0d4d8; box-sizing: border-box; }
.lh-a { width: 170px; padding-left: 10px; box-sizing: border-box; background: #2060ae; border-right: 1px solid #d0d8e0; }
.lh-b { width: 212px; background: #2060ae; }
.lh-c { flex: 1; background: #f2f4f4; }
.lab-body { display: flex; height: 98px; overflow: hidden; }
.lab-rows { flex: 1; }
.lab-row { display: flex; height: 25.700px; border-bottom: 1px solid #dfe3e6; box-sizing: border-box; color: #2060ae; font-size: 14px; font-weight: 700; letter-spacing: .2px; line-height: 26px; }
.lc-a { width: 181px; text-align: center; border-right: 1px solid #dfe3e6; margin-right: 1px; }
.lc-b { flex: 1; text-align: right; padding-right: 12px; border-left: 1px solid #dfe3e6; }
.lab-scroll { width: 5px; margin-bottom: 1px; background: #4f7ca8; }
.lab-foot { display: flex; height: 25px; justify-content: space-between; }
.lf-a { width: 179px; background: #2060ae; }
.lf-b { width: 211px; background: #2060ae; color: #fff; font-size: 19px; font-weight: 700; text-align: right; padding-right: 11px; box-sizing: border-box; line-height: 24px; }
.pie { margin: 29px 0 0 39px; width: 447px; height: 241px; }
.pie-svg { display: block; }
.pie-lb { font-size: 11px; fill: #333; }
.pie-lb .strong { font-weight: 500; fill: #222; }
.pie-lg { font-size: 11px; fill: #444; }
.tree { width: 895px; height: 484px; position: relative; }
.treemap { position: relative; margin: 53px 0 0 9px; width: 878px; height: 336px; box-sizing: border-box; border: 1px solid #cfd2d6; box-shadow: 1px 1px 1px #d5d5d5; }
.tile { position: absolute; margin: -1px 0 0 -1px; }
.part { position: absolute; }
.tile-label { position: absolute; inset: 0; padding-top: 1px; display: flex; align-items: center; justify-content: center; overflow: visible; white-space: pre-line; color: #1c1c1c; font-size: 10.500px; line-height: 12.500px; text-shadow: 1px 0 1px #fff, -1px 0 1px #fff, 0 1px 1px #fff, 0 -1px 1px #fff; }
.tile-label span { flex-shrink: 0; }
.swatches { position: absolute; left: 360px; top: 434px; display: flex; gap: 1px; }
.swatches i { display: block; width: 9.600px; height: 10px; }
.map-card { margin: 29px 0 0 39px; width: 633px; height: 754px; flex-shrink: 0; overflow: hidden; }
.card-title + .map-wrap { margin-top: 1px; }
.map-wrap { position: relative; height: 722px; }
.map { display: block; }
.road { fill: none; stroke: #f3b7ab; stroke-width: .8; vector-effect: non-scaling-stroke; }
.sea-line { fill: none; stroke: #9a8fb5; stroke-width: 1; opacity: .55; vector-effect: non-scaling-stroke; }
.dept { stroke: #a3aebd; stroke-width: 1; stroke-linejoin: round; vector-effect: non-scaling-stroke; fill-opacity: .96; }
.lb { font-family: "Noto Sans", "DejaVu Sans", sans-serif; font-size: 9.500px; fill: #555; stroke: #fff; stroke-width: 2px; stroke-opacity: .7; paint-order: stroke; }
.lb.b { font-size: 11px; letter-spacing: .4px; fill: #4b4b4b; }
.lb.r { font-style: italic; fill: #a983b8; }
.lb.w { font-style: italic; fill: #7f9fd0; stroke-opacity: .35; }
.zoom-ctl { position: absolute; left: 10px; top: 9px; width: 22px; display: flex; flex-direction: column; gap: 1px; padding: 1px; background: rgba(255, 255, 255, .35); border-radius: 3px; }
.zoom-ctl b { display: block; height: 22px; background: #4379b6; opacity: .85; color: #fff; font: 700 16px/21px "Liberation Sans", sans-serif; text-align: center; }
.fab { position: absolute; top: 681px; width: 36px; height: 36px; border-radius: 50%; background: rgba(150, 170, 185, .8); display: flex; align-items: center; justify-content: center; }
.fab-a { left: 489px; }
.fab-b { left: 539px; }
.fab-c { left: 590px; }
.col-right { margin-left: 40px; width: 221px; flex-shrink: 0; }
.total-inj { margin-top: 2px; height: 24px; background: #fff; border-radius: 8px; color: #2060ae; font-size: 15.800px; font-weight: 700; line-height: 26px; text-align: center; box-shadow: 0 2px 8px rgba(0, 0, 0, .1); }
.top30 { margin-top: 3px; height: 753px; padding: 0 4px 0 5px; box-sizing: border-box; position: relative; }
.top-head { display: flex; height: 29px; background: #2060ae; color: #fff; font-size: 13px; font-weight: 700; line-height: 27px; border-bottom: 1px solid #c9ced4; box-sizing: border-box; }
.th-a { width: 114px; text-align: center; border-right: 1px solid transparent; }
.th-b { flex: 1; text-align: right; padding-right: 11px; }
.top-body { display: flex; height: 677px; overflow: hidden; }
.top-rows { flex: 1; }
.top-row { display: flex; justify-content: space-between; height: 25.230px; box-sizing: border-box; padding: 0 7px 0 11px; border-bottom: 1px solid #d9dde1; color: #333; font-size: 10.800px; line-height: 26px; }
.top-row:nth-child(even) { background: #e2e6eb; }
.top-scroll { width: 5px; background: #ddd; height: 673px; }
.top-scroll i { display: block; height: 598px; background: #4f7ca8; }
.h-scroll { position: absolute; left: 5px; top: 744px; width: 195px; height: 5px; background: #ddd; border-radius: 3px; }
.h-scroll i { display: block; width: 179px; height: 5px; background: #4f7ca8; border-radius: 3px; }
.tabs { height: 27px; background: #f5f5f5; border-top: 1px solid #ccc; box-sizing: border-box; display: flex; align-items: stretch; padding-left: 17px; font-size: 11.600px; color: #222; }
.tab { line-height: 25px; margin-right: 13px; }
.tab.active { margin-top: -1px; width: 80px; text-align: center; background: #fff; color: #3c678c; border: 1px solid #ccc; border-top: none; border-bottom: 3px solid #0000e0; box-sizing: border-box; line-height: 21px; font-weight: 500; height: 26px; }
</style>

<style>
body { margin: 0; background: #e0e0e0; }
</style>
